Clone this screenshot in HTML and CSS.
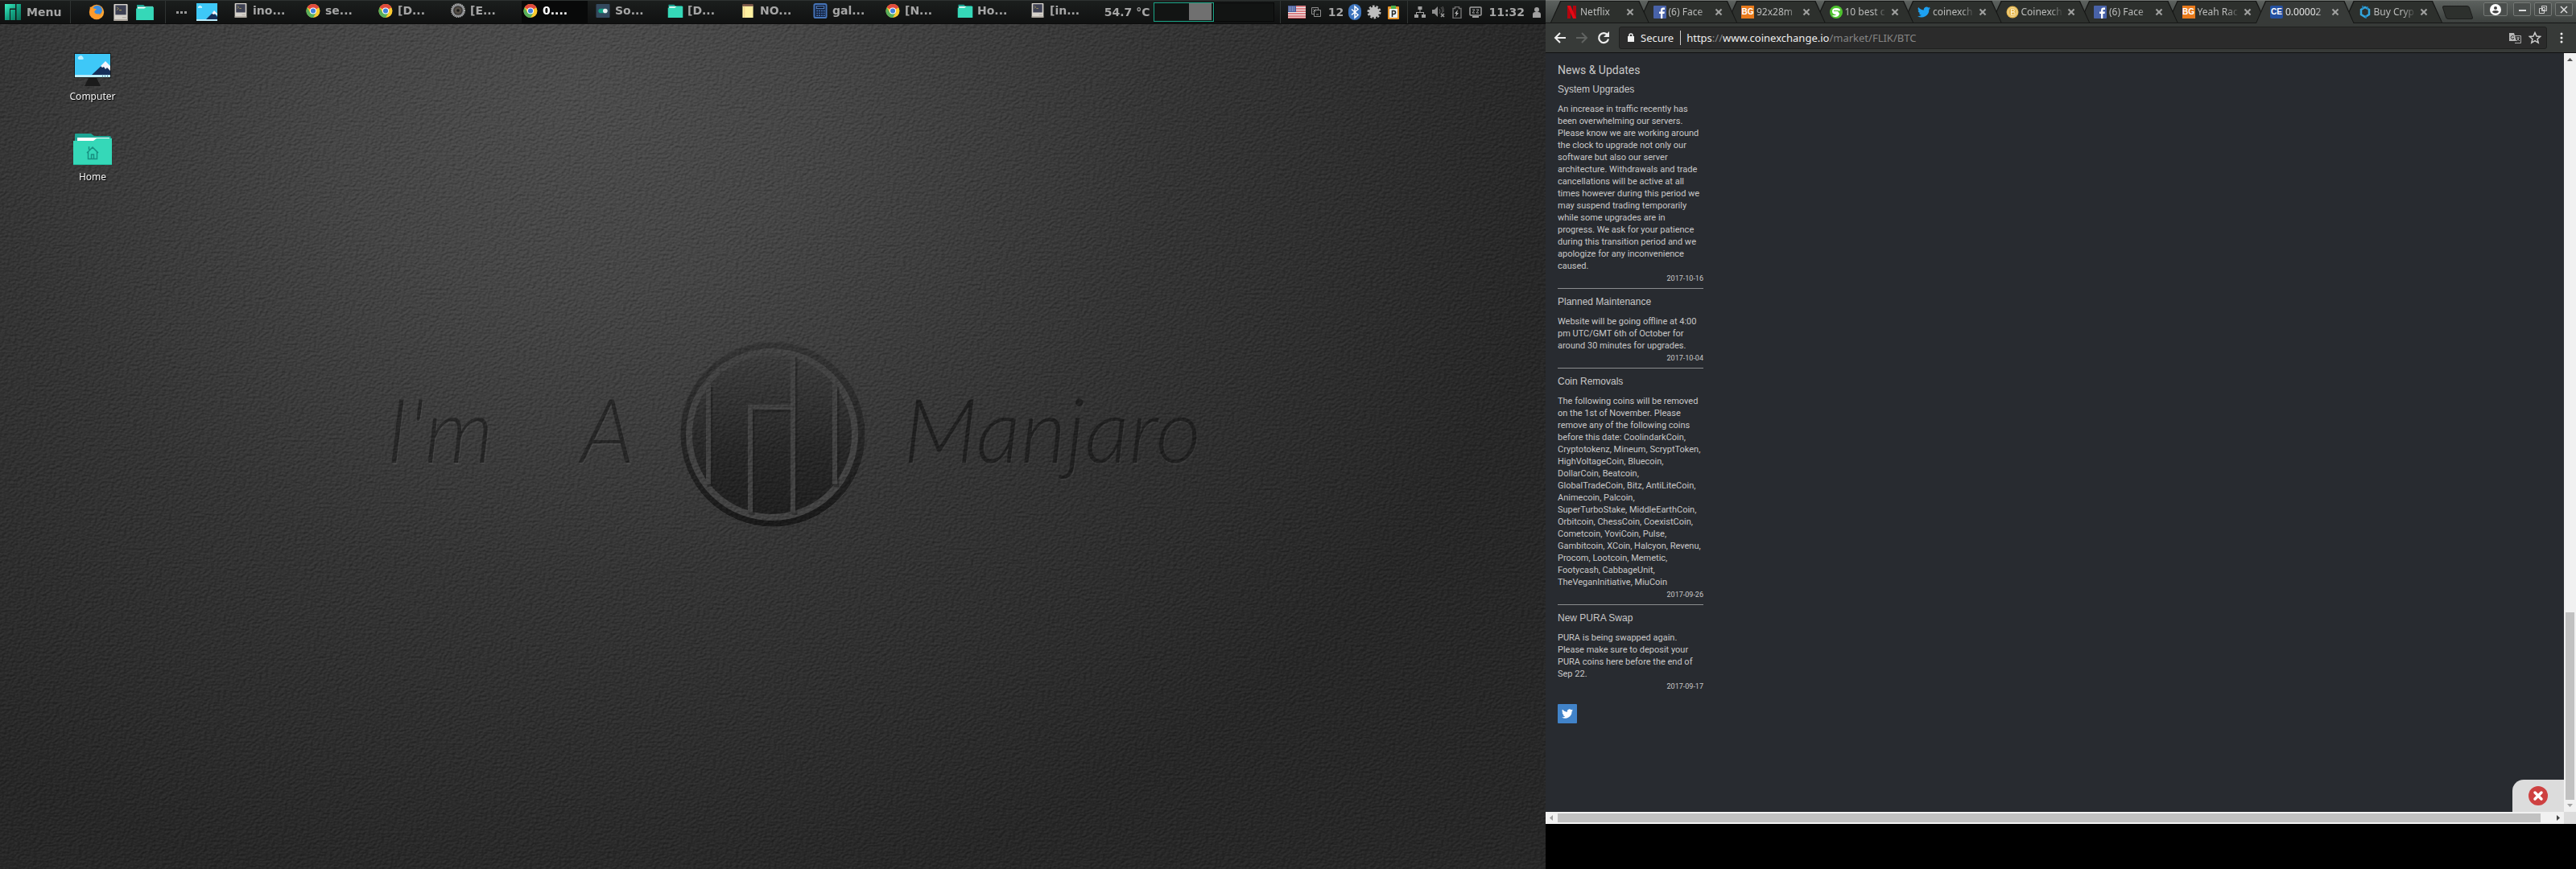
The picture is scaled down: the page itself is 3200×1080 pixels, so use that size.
FILE: index.html
```html
<!DOCTYPE html>
<html lang="en">
<head>
<meta charset="utf-8">
<title>Desktop</title>
<link rel="stylesheet" href="styles.css">
</head>
<body>
<svg class="defs" aria-hidden="true">
  <defs>
    <linearGradient id="mj" x1="0" y1="0" x2="1" y2="1"><stop offset="0" stop-color="#3ff0c4"/><stop offset=".5" stop-color="#14a383"/><stop offset="1" stop-color="#0b6b54"/></linearGradient>
    <linearGradient id="disc" x1="0" y1="0" x2="0" y2="1"><stop offset="0" stop-color="#3c3c3c"/><stop offset=".6" stop-color="#272727"/><stop offset="1" stop-color="#1f1f1f"/></linearGradient>
    <linearGradient id="rim" x1="0" y1="0" x2="0" y2="1"><stop offset="0" stop-color="#343434"/><stop offset="1" stop-color="#191919"/></linearGradient>
    <symbol id="manjaro" viewBox="0 0 20 20"><path fill="url(#mj)" d="M0 0h13v5.500H6V20H0zM7 7h6v13H7zM14.500 0H20v20h-5.500z"/></symbol>
    <symbol id="firefox" viewBox="0 0 24 24"><circle cx="12" cy="12" r="10" fill="#fd9a2b"/><circle cx="13" cy="9.500" r="6.500" fill="#3b8de0"/><path fill="#fd9a2b" d="M3 5c2 1 4 1 5 2l4 1c-1 2-3 2-3 4 1 3 5 3 7 2-2 5-10 6-13 1z"/><path fill="#f4b13c" d="M20 7c3 6 0 12-5 14 4-3 6-9 5-14z"/></symbol>
    <symbol id="term" viewBox="0 0 18 22"><rect width="18" height="22" rx="1" fill="#d6d2cb"/><rect x="2" y="1.500" width="14" height="12.500" fill="#3e4153"/><path d="M4 4l2 2-2 2M7 8h3" fill="none" stroke="#b3a55a"/><path fill="#aaa49c" d="M11 17h5v1h-5zM0 20h18v2H0z"/></symbol>
    <symbol id="folder" viewBox="0 0 24 22"><path fill="#1da594" d="M1 1h9l2 2h11v4H1z"/><path fill="#fff" d="M2 4h21v4H2z"/><path fill="#35d8b8" d="M0 6h11l3-2h10v18H0z"/></symbol>
    <symbol id="chrome" viewBox="0 0 20 20"><circle cx="10" cy="10" r="10" fill="#fccb2f"/><path fill="#e04a3d" d="M10 10L1.300 5A10 10 0 0 1 18.700 5z"/><path fill="#58b05c" d="M1.300 5A10 10 0 0 0 10 20l4.300-7.500L5.700 12.500z"/><circle cx="10" cy="10" r="4.800" fill="#fff"/><circle cx="10" cy="10" r="3.600" fill="#4080dc"/></symbol>
    <symbol id="speaker" viewBox="0 0 20 20"><circle cx="10" cy="10" r="9" fill="#8b8d90" stroke="#aaa" stroke-width="2" stroke-dasharray="1.500 1"/><circle cx="10" cy="10" r="6.500" fill="#3a3836"/><circle cx="10" cy="10" r="4.500" fill="#565048"/><circle cx="10" cy="10" r="2" fill="#171717"/></symbol>
    <symbol id="toggle" viewBox="0 0 18 18"><rect width="18" height="18" rx="1" fill="#34495e"/><rect x="3" y="6" width="12" height="6" rx="3" fill="#16a085"/><circle cx="12" cy="9" r="3" fill="#ecf0f1"/></symbol>
    <symbol id="note" viewBox="0 0 14 18"><path fill="#fdf0a0" d="M0 2h14v16H0z"/><path fill="#795548" d="M0 0h14v3H0z"/><path fill="#f0c987" d="M2 3h1v15H2z"/></symbol>
    <symbol id="calc" viewBox="0 0 18 20"><rect x="1" y="1" width="16" height="18" rx="2" fill="#14233f" stroke="#4674b8" stroke-width="2"/><rect x="4" y="4" width="10" height="3" fill="#0b1424" stroke="#5d8ace"/><path stroke="#4674b8" stroke-width="1.500" stroke-dasharray="2 1" d="M4 10h11M4 13h11M4 16h11"/></symbol>
    <symbol id="screen" viewBox="0 0 26 22"><rect width="26" height="22" fill="#3ec8f8"/><path fill="#16305a" d="M12 20l9-9 5 6v3z"/><path fill="#f3f4fa" d="M19 13l3-4 4 4v2l-3-2-1 1z"/><path fill="#bdeefd" d="M0 20h26v2H0zM2 4h5v2H2zM3 3h3v1H3z"/></symbol>
    <symbol id="fb" viewBox="0 0 16 16"><rect width="16" height="16" rx="1" fill="#4862a8"/><path fill="#fff" d="M9 16V10H7V7.500h2V6c0-2.500 1-3.500 3-3.500h2v2.500h-1.500c-1 0-1.200.4-1.200 1.200v1.300h2.600L13.500 10h-2.200v6z"/></symbol>
    <symbol id="bird" viewBox="0 0 24 24"><path d="M24 4.600a10 10 0 0 1-2.800.8 5 5 0 0 0 2.100-2.700 10 10 0 0 1-3.100 1.200 4.900 4.900 0 0 0-8.400 4.500A14 14 0 0 1 1.700 3.100a4.900 4.900 0 0 0 1.500 6.600 5 5 0 0 1-2.200-.6 4.900 4.900 0 0 0 3.900 4.900 5 5 0 0 1-2.200.1 4.900 4.900 0 0 0 4.600 3.400A10 10 0 0 1 0 19.500a14 14 0 0 0 21.500-12.400A10 10 0 0 0 24 4.600z"/></symbol>
  </defs>
</svg>

<main class="screens">
  <section class="desktop" aria-label="Desktop">
    <svg class="grain" aria-hidden="true">
      <filter id="leather" x="0" y="0" width="100%" height="100%" color-interpolation-filters="sRGB">
        <feTurbulence type="fractalNoise" baseFrequency=".25 .35" numOctaves="2" seed="4"/>
        <feDiffuseLighting surfaceScale="1.500" diffuseConstant=".62" lighting-color="#fff"><feDistantLight azimuth="235" elevation="55"/></feDiffuseLighting>
      </filter>
      <rect width="100%" height="100%" filter="url(#leather)"/>
    </svg>
    <div class="emboss">
      <p class="script script-left"><span>I'm</span><span>A</span></p>
      <svg class="medal" viewBox="0 0 232 232" aria-hidden="true">
        <circle cx="116" cy="116" r="115" fill="url(#rim)" stroke="#3a3a3a"/>
        <circle cx="115" cy="116" r="103" fill="url(#disc)" stroke="#424242" stroke-width="8"/>
        <path d="M36 54v124M193 54v124M88 213V82h54M141 17v196" fill="none" stroke="#1c1c1c" stroke-width="7" transform="translate(2 3)" opacity=".5"/>
        <path d="M36 54v124M193 54v124M88 213V82h54M141 17v196" fill="none" stroke="#414141" stroke-width="6"/>
      </svg>
      <p class="script script-right">Manjaro</p>
    </div>

    <header class="panel">
      <button class="menu"><svg width="20" height="20"><use href="#manjaro"/></svg>Menu</button>
      <div class="launchers">
        <button aria-label="Firefox"><svg width="24" height="22"><use href="#firefox"/></svg></button>
        <button aria-label="Terminal"><svg width="18" height="21"><use href="#term"/></svg></button>
        <button aria-label="Files"><svg width="24" height="20"><use href="#folder"/></svg></button>
      </div>
      <span class="dots"><i></i><i></i><i></i></span>
      <button class="show" aria-label="Show desktop"><svg width="26" height="22"><use href="#screen"/></svg></button>
      <nav class="tasks">
        <button><svg width="20" height="18"><use href="#term"/></svg>ino...</button>
        <button><svg width="20" height="17"><use href="#chrome"/></svg>se...</button>
        <button><svg width="20" height="17"><use href="#chrome"/></svg>[D...</button>
        <button><svg width="20" height="18"><use href="#speaker"/></svg>[E...</button>
        <button class="on"><svg width="20" height="17"><use href="#chrome"/></svg>0....</button>
        <button><svg width="20" height="17"><use href="#toggle"/></svg>So...</button>
        <button><svg width="20" height="17"><use href="#folder"/></svg>[D...</button>
        <button><svg width="20" height="17"><use href="#note"/></svg>NO...</button>
        <button><svg width="20" height="19"><use href="#calc"/></svg>gal...</button>
        <button><svg width="20" height="17"><use href="#chrome"/></svg>[N...</button>
        <button><svg width="20" height="17"><use href="#folder"/></svg>Ho...</button>
        <button><svg width="20" height="18"><use href="#term"/></svg>[in...</button>
      </nav>
      <span class="temp">54.7 °C</span>
      <div class="pager"><button class="now" aria-label="Workspace 1"><i></i></button><button aria-label="Workspace 2"></button></div>
      <div class="tray apps">
        <svg width="22" height="16" viewBox="0 0 22 16"><path fill="#eee" d="M0 0h22v16H0z"/><path stroke="#d45a60" stroke-width="1.500" d="M0 1h22M0 4h22M0 7h22M0 10h22M0 13h22M0 15.500h22"/><path fill="#4a5f9c" d="M0 0h10v8H0z"/><path stroke="#cdd4ea" stroke-dasharray="1 1" d="M1 2h8M1 4h8M1 6h8"/></svg>
        <svg width="12" height="12" viewBox="0 0 12 12" fill="none" stroke="#8e8e8e"><path d="M3.500 8.500h-3v-8h8v3M3.500 3.500h8v8h-8zM2.500 2.500l3 3M5.500 2.500l-3 3M6 9h3"/></svg>
        <span>12</span>
        <svg width="16" height="20" viewBox="0 0 16 20"><rect width="16" height="20" rx="8" fill="#3d74bd"/><path d="M4 6.500l8 7-4 3.500V3l4 3.500-8 7" fill="none" stroke="#fff" stroke-width="1.500"/></svg>
        <svg width="18" height="18" viewBox="0 0 18 18"><circle cx="9" cy="9" r="6.500" fill="#bdbdbd"/><circle cx="9" cy="9" r="7" fill="none" stroke="#bdbdbd" stroke-width="3" stroke-dasharray="2.500 1.900"/></svg>
        <svg width="14" height="17" viewBox="0 0 14 17"><rect y="1" width="14" height="16" rx="1" fill="#e8952c"/><path fill="#eef4fb" d="M2 4h10v11H2z"/><path fill="#4cb04a" d="M4 0h6v4H4z"/><path d="M5.500 14V6.500h2a2 2 0 0 1 0 4h-2" fill="none" stroke="#222" stroke-width="1.500"/></svg>
      </div>
      <div class="tray system">
        <svg width="14" height="14" viewBox="0 0 14 14" fill="#a0a0a0"><path d="M4.500 0h5v4h-5zM0 10h5v4H0zM9 10h5v4H9zM6.500 4h1v3h-1zM2 7h10v1H2zM2 7h1v3H2zM11 7h1v3h-1z"/></svg>
        <svg width="16" height="14" viewBox="0 0 16 14"><path fill="#8e8e8e" d="M0 4h3l4-4v13L3 9H0z"/><path d="M9 3q2 3 0 6M11 1q4 5 0 9M13 0q2 4 1 7" fill="none" stroke="#5e5e5e"/><path d="M11 9l4 4M15 9l-4 4" stroke="#a0a0a0" stroke-width="1.500"/></svg>
        <svg width="12" height="15" viewBox="0 0 12 15"><path d="M1 2.500h2.500v-2h5v2H11v12H1z" fill="none" stroke="#6e6e6e" stroke-width="1.500"/><path fill="#b0b0b0" d="M7 4L3 9h2l-1 4 4-5H6z"/></svg>
        <svg width="16" height="14" viewBox="0 0 16 14"><rect x="1" y="1" width="14" height="10" rx="1" fill="none" stroke="#a0a0a0" stroke-width="1.500"/><path d="M4 4h3L4 8h3M9 4h3L9 8h3" fill="none" stroke="#a0a0a0"/><path fill="#a0a0a0" d="M4 12h8v2H4z"/></svg>
      </div>
      <time class="clock">11:32</time>
      <svg class="user" width="10" height="13" viewBox="0 0 10 13" fill="#a0a0a0"><circle cx="5" cy="3" r="3"/><path d="M0 13V9q0-3 3-3h4q3 0 3 3v4z"/></svg>
    </header>

    <nav class="icons">
      <a href="#computer">
        <svg width="48" height="48" viewBox="0 0 48 48"><path fill="#1b1b1b" d="M1 5h46v31H1zM19 36h10l5 10H14z"/><path fill="#3ec8f8" d="M2 6h44v26H2z"/><path fill="#16305a" d="M23 32l17-16 6 7v9z"/><path fill="#f3f4fa" d="M34 21l6-6 6 6v6l-4-4-2 2-2-3-2 1z"/><path fill="#bdeefd" d="M2 32h44v3H2zM6 10q4-4 6 0 2 3-1 3H7q-2-1-1-3z"/><path fill="#16305a" d="M36 33h1v1h-1zM39 33h1v1h-1zM42 33h1v1h-1z"/></svg>
        Computer
      </a>
      <a href="#home">
        <svg width="48" height="48" viewBox="0 0 48 48"><path fill="#1da594" d="M2 6q0-1 1-1h19l4 3h19q2 0 2 2v6H2z"/><path fill="#fff" d="M5 10h40v7H5z"/><path fill="#35d8b8" d="M0 14h25l4-3h19v33H0z"/><path fill="#22b89c" d="M0 43h48v1H0z"/><path d="M17 29l7-7 7 7M18.500 28v8.500h11V28M19.500 25v-4M22.500 36v-5h3v5" fill="none" stroke="#178f80" stroke-width="1.500"/></svg>
        Home
      </a>
    </nav>
  </section>

  <section class="monitor" aria-label="Browser">
    <div class="window">
      <div class="titlebar">
        <ul class="tabs">
          <li style="--z:9"><a href="#t1"><svg width="16" height="16" viewBox="0 0 16 16"><path fill="#b1060f" d="M3 0h4v16H3zM10 0h4v16h-4z"/><path fill="#e50914" d="M3 0h4l7 16h-4z"/></svg><span>Netflix</span></a><button aria-label="Close"></button></li>
          <li style="--z:8"><a href="#t2"><svg width="16" height="16"><use href="#fb"/></svg><span>(6) Face</span></a><button aria-label="Close"></button></li>
          <li style="--z:7"><a href="#t3"><b class="fav orange">BG</b><span>92x28m</span></a><button aria-label="Close"></button></li>
          <li style="--z:6"><a href="#t4"><svg width="16" height="16" viewBox="0 0 16 16"><circle cx="8" cy="8" r="8" fill="#4fc32f"/><path fill="#fff" d="M3 7q0-4 5-4 5 0 5 3l-3 1 2 3q-1 4-5 4-3 0-4-2 4 1 5-1-5 0-5-4z"/><path fill="#4fc32f" d="M5 6h6v1H5z"/></svg><span>10 best c</span></a><button aria-label="Close"></button></li>
          <li style="--z:5"><a href="#t5"><svg width="16" height="16" fill="#1da1f2"><use href="#bird"/></svg><span>coinexch</span></a><button aria-label="Close"></button></li>
          <li style="--z:4"><a href="#t6"><svg width="16" height="16" viewBox="0 0 16 16"><circle cx="8" cy="8" r="7.500" fill="#e5b650"/><circle cx="8" cy="8" r="5.500" fill="none" stroke="#f6dfa0"/><path d="M6.500 4.500h2.200a1.700 1.700 0 0 1 0 3.400H6.500zm0 3.400h2.700a1.800 1.800 0 0 1 0 3.600H6.500z" fill="none" stroke="#fff3cf"/></svg><span>Coinexch</span></a><button aria-label="Close"></button></li>
          <li style="--z:3"><a href="#t7"><svg width="16" height="16"><use href="#fb"/></svg><span>(6) Face</span></a><button aria-label="Close"></button></li>
          <li style="--z:2"><a href="#t8"><b class="fav orange">BG</b><span>Yeah Rac</span></a><button aria-label="Close"></button></li>
          <li class="current" style="--z:10"><a href="#t9"><b class="fav blue">CE</b><span>0.00002</span></a><button aria-label="Close"></button></li>
          <li style="--z:1"><a href="#t10"><svg width="16" height="16" viewBox="0 0 16 16"><path d="M8 2l5 3v6l-5 3-5-3V5z" fill="none" stroke="#34a5dc" stroke-width="2.500"/><path d="M5 0v4M9 12v4M11 1v4" stroke="#1d7fb8" stroke-width="1.500"/></svg><span>Buy Cryp</span></a><button aria-label="Close"></button></li>
        </ul>
        <button class="newtab" aria-label="New tab"></button>
        <div class="controls">
          <button class="profile" aria-label="Profile"><svg width="14" height="14" viewBox="0 0 14 14"><circle cx="7" cy="7" r="7" fill="#fff"/><circle cx="7" cy="5" r="2" fill="#444"/><path fill="#444" d="M3 10q0-2 4-2t4 2q-4 3-8 0z"/></svg></button>
          <button aria-label="Minimize"><svg width="12" height="12"><path d="M2 7h9" stroke="#ddd" stroke-width="2"/></svg></button>
          <button aria-label="Restore"><svg width="12" height="12" fill="none" stroke="#ccc"><path d="M4.500 1.500h6v6h-6zM4 4.500H1.500v6h6V8M5.500 3.500h3v3h-3z"/></svg></button>
          <button aria-label="Close window"><svg width="12" height="12"><path d="M2 2l8 8M10 2l-8 8" stroke="#ddd" stroke-width="1.500"/></svg></button>
        </div>
      </div>

      <div class="toolbar">
        <button aria-label="Back"><svg width="16" height="16" viewBox="0 0 16 16"><path d="M15 8H2M8 2L2 8l6 6" fill="none" stroke="#eee" stroke-width="2"/></svg></button>
        <button aria-label="Forward"><svg width="16" height="16" viewBox="0 0 16 16"><path d="M1 8h13M8 2l6 6-6 6" fill="none" stroke="#606361" stroke-width="2"/></svg></button>
        <button aria-label="Reload"><svg width="16" height="16" viewBox="0 0 16 16"><path d="M13 4.500A6 6 0 1 0 14 9.500" fill="none" stroke="#eee" stroke-width="2.200"/><path fill="#eee" d="M15 0v7H8z"/></svg></button>
        <div class="omnibox">
          <svg width="10" height="12" viewBox="0 0 10 12"><rect x="1" y="4" width="8" height="7" fill="#f0f0f0"/><path d="M3 5V3a2 2 0 0 1 4 0v2" fill="none" stroke="#f0f0f0" stroke-width="1.500"/></svg>
          <span class="secure">Secure</span>
          <span class="url">https<i>://</i>www.coinexchange.io<i>/market/FLIK/BTC</i></span>
          <button aria-label="Translate"><svg width="15" height="15" viewBox="0 0 15 15"><path d="M6 4.500h8.500v9H7" fill="none" stroke="#aaa"/><path fill="#b8b8b8" d="M0 1h6l3 10H0z"/><path d="M6 5.500a2 2 0 1 0 0 2H4.500" fill="none" stroke="#333"/><path d="M9 7h4M11 6v1M12 7q-1 3-3 4M10 8l3 3" stroke="#aaa" fill="none"/></svg></button>
          <button aria-label="Bookmark"><svg width="16" height="16" viewBox="0 0 16 16"><path d="M8 1.500l2 4.500 4.700.4-3.600 3.100 1.100 4.700L8 11.700l-4.200 2.500 1.100-4.700L1.300 6.400 6 6z" fill="none" stroke="#ccc" stroke-width="1.500"/></svg></button>
        </div>
        <button class="more" aria-label="More"><svg width="4" height="14" fill="#eee"><circle cx="2" cy="2" r="1.500"/><circle cx="2" cy="7" r="1.500"/><circle cx="2" cy="12" r="1.500"/></svg></button>
      </div>

      <div class="viewport">
        <div class="page">
          <aside class="news">
            <h1>News &amp; Updates</h1>
            <article><h2>System Upgrades</h2><p>An increase in traffic recently has been overwhelming our servers. Please know we are working around the clock to upgrade not only our software but also our server architecture. Withdrawals and trade cancellations will be active at all times however during this period we may suspend trading temporarily while some upgrades are in progress. We ask for your patience during this transition period and we apologize for any inconvenience caused.</p><time>2017-10-16</time></article>
            <article><h2>Planned Maintenance</h2><p>Website will be going offline at 4:00 pm UTC/GMT 6th of October for around 30 minutes for upgrades.</p><time>2017-10-04</time></article>
            <article><h2>Coin Removals</h2><p>The following coins will be removed on the 1st of November. Please remove any of the following coins before this date: CoolindarkCoin, Cryptotokenz, Mineum, ScryptToken, HighVoltageCoin, Bluecoin, DollarCoin, Beatcoin, GlobalTradeCoin, Bitz, AntiLiteCoin, Animecoin, Palcoin, SuperTurboStake, MiddleEarthCoin, Orbitcoin, ChessCoin, CoexistCoin, Cometcoin, YoviCoin, Pulse, Gambitcoin, XCoin, Halcyon, Revenu, Procom, Lootcoin, Memetic, Footycash, CabbageUnit, TheVeganInitiative, MiuCoin</p><time>2017-09-26</time></article>
            <article><h2>New PURA Swap</h2><p>PURA is being swapped again. Please make sure to deposit your PURA coins here before the end of Sep 22.</p><time>2017-09-17</time></article>
            <a class="twitter" href="#twitter" aria-label="Twitter"><svg width="14" height="14" fill="#fff"><use href="#bird"/></svg></a>
          </aside>
          <button class="chat" aria-label="Close chat"><svg width="24" height="24" viewBox="0 0 24 24"><circle cx="12" cy="12" r="12" fill="#ce4141"/><path d="M8 8l8 8M16 8l-8 8" stroke="#fff" stroke-width="3.500" stroke-linecap="round"/></svg></button>
        </div>
        <div class="vbar"><svg width="7" height="4"><path fill="#505050" d="M0 4l3.500-4L7 4z"/></svg><i></i><svg width="7" height="4"><path fill="#a0a0a0" d="M0 0h7L3.500 4z"/></svg></div>
        <div class="hbar"><svg width="4" height="7"><path fill="#a0a0a0" d="M4 0v7L0 3.500z"/></svg><i></i><svg width="4" height="7"><path fill="#404040" d="M0 0l4 3.500L0 7z"/></svg></div>
        <div class="corner"></div>
      </div>
    </div>
  </section>
</main>
</body>
</html>
```
FILE: styles.css
```css
* { box-sizing: border-box; }
body { margin: 0; background: #000; font-family: "Noto Sans", sans-serif; }
button { margin: 0; padding: 0; border: 0; background: none; color: inherit; font: inherit; }
a { color: inherit; text-decoration: none; }
svg { display: block; flex: none; }
p, h1, h2, ul { margin: 0; padding: 0; font-weight: 400; list-style: none; }
.defs { position: absolute; width: 0; height: 0; }
.screens { display: grid; grid-template-columns: 3fr 2fr; min-height: 100vh; }

/* Desktop and wallpaper */
.desktop {
  position: relative; isolation: isolate; overflow: hidden; min-width: 0;
  background: radial-gradient(ellipse 65% 95% at 37% 10%, #4c4c4c 0%, #454545 25%, #343434 60%, #272727 100%);
}
.grain { position: absolute; inset: 0; width: 100%; height: 100%; z-index: -1; mix-blend-mode: soft-light; opacity: .6; }
.emboss {
  position: absolute; inset: 0; z-index: -2;
  display: grid; grid-template-columns: 1fr auto 1fr; align-items: center;
}
.medal { width: 232px; height: 232px; }
.script { display: flex; gap: 108px; padding-bottom: 16px; font: italic 300 110px/128px Lato, sans-serif; color: #262626; text-shadow: 1px 2px 1px #484848; }
.script-left { justify-content: flex-end; padding-right: 56px; }
.script-right { padding-left: 46px; color: #1f1f1f; text-shadow: 1px 2px 1px #3a3a3a; }

/* Top panel */
.panel {
  display: flex; align-items: center; height: 30px; padding-right: 6px;
  background: linear-gradient(#1b1e1d, #101111); border-top: 1px solid #2d3230; border-bottom: 1px solid #0c0c0c;
  color: #a6a6a6; font: bold 14px/20px "DejaVu Sans", sans-serif; white-space: nowrap;
}
.menu { display: flex; align-items: center; gap: 7px; width: 88px; height: 28px; padding-left: 6px; border-right: 1px solid #2f3332; }
.launchers { display: flex; gap: 6px; width: 118px; height: 28px; padding-left: 20px; border-right: 1px solid #2f3332; align-items: center; }
.launchers button { display: flex; justify-content: center; width: 24px; }
.dots { display: flex; gap: 2px; margin-left: 13px; }
.dots i { width: 3px; height: 3px; background: #999; }
.show { margin-left: 12px; }
.tasks { display: flex; flex: 1; gap: 8px; margin-left: 18px; min-width: 0; }
.tasks button { display: flex; align-items: center; gap: 5px; width: 82px; height: 28px; padding: 0 0 4px 1px; }
.tasks .on { background: #080909; color: #fff; }
.temp { margin-right: 5px; }
.pager { display: flex; margin-right: 7px; }
.pager button { width: 75px; height: 24px; border: 1px solid #080808; background: #121413; }
.pager .now { display: flex; justify-content: flex-end; border: 1px solid #1aa587; padding: 0 2px 1px; }
.pager i { width: 28px; height: 21px; background: #707070; }
.tray { display: flex; align-items: center; height: 28px; border-left: 1px solid #2f3332; }
.tray > * { box-sizing: content-box; display: flex; justify-content: center; }
.apps { display: grid; grid-template-columns: repeat(6, 24px); justify-items: center; padding: 0 5px 0 8px; }
.apps > * { width: auto; }
.system { display: grid; grid-template-columns: repeat(4, 23px); justify-items: center; padding: 0 5px 0 3px; }
.user { margin-left: 10px; }

/* Desktop shortcuts */
.icons { display: flex; flex-direction: column; align-items: flex-start; gap: 33px; padding: 31px 0 0 75px; }
.icons a { display: flex; flex-direction: column; align-items: center; gap: 3px; width: 80px; color: #f2f2f2; font-size: 12px; line-height: 16px; text-shadow: 1px 1px 1px #000; }

/* Browser window */
.monitor { display: flex; flex-direction: column; min-width: 0; padding-bottom: 56px; background: #000; }
.window { display: flex; flex: 1; flex-direction: column; }
.titlebar { display: flex; height: 29px; padding-left: 6px; background: linear-gradient(#5c615e, #3c403e); border-top: 1px solid #727673; border-bottom: 1px solid #161716; }
.tabs { display: flex; flex: 0 1 1108px; padding-right: 13px; color: #bcbdbc; font-size: 12px; line-height: 16px; }
.tabs li { position: relative; z-index: var(--z); display: flex; flex: 1 1 0; align-items: center; min-width: 0; height: 27px; margin-right: -13px; padding-left: 18px; }
.tabs li::before, .tabs li::after { content: ""; position: absolute; z-index: -1; inset: 0; clip-path: polygon(0 100%, 12px 0, calc(100% - 12px) 0, 100% 100%); background: #151615; }
.tabs li::after { inset: 1px 1px 0; background: #2d302d; }
.tabs .current { height: 28px; color: #e4e4e4; }
.tabs .current::after { background: #373a38; }
.tabs a { display: flex; align-items: center; gap: 3px; }
.tabs span { width: 52px; white-space: nowrap; -webkit-mask-image: linear-gradient(90deg, #000 70%, transparent); mask-image: linear-gradient(90deg, #000 70%, transparent); }
.tabs button { position: relative; width: 8px; height: 8px; margin-left: 6px; }
.tabs button::before, .tabs button::after { content: ""; position: absolute; left: -1px; top: 3px; width: 10px; height: 2px; background: #a0a1a0; transform: rotate(45deg); }
.tabs button::after { transform: rotate(-45deg); }
.fav { width: 16px; height: 16px; color: #fff; font: bold 10px/16px "Liberation Sans", sans-serif; text-align: center; }
.orange { background: #e87a1c; }
.blue { background: #2450a0; border-radius: 2px; }
.newtab { width: 34px; height: 17px; margin: 6px 0 0 2px; background: #2d302d; border: 1px solid #1c1d1c; border-radius: 3px; transform: skewX(18deg); }
.controls { display: flex; gap: 4px; margin: 2px 4px 0 auto; }
.controls button { display: grid; place-items: center; width: 22px; height: 17px; border: 1px solid #747875; border-radius: 2px; background: #4a4e4c; }
.controls .profile { width: 30px; margin-right: 3px; }

.toolbar { display: flex; align-items: center; height: 37px; padding: 0 16px 0 10px; background: #373a38; border-bottom: 1px solid #111; }
.toolbar > button { margin-right: 11px; }
.omnibox { display: flex; flex: 1; align-items: center; height: 28px; margin-right: 16px; padding: 0 6px 0 9px; background: #2b2b2b; border: 1px solid #1f201f; border-radius: 3px; color: #eee; font-size: 13px; line-height: 18px; }
.secure { margin-left: 7px; padding-right: 8px; border-right: 1px solid #ccc; }
.url { flex: 1; margin-left: 7px; }
.url i { color: #858585; font-style: normal; }
.omnibox button { margin-left: 9px; }
.toolbar .more { margin: 0; }

.viewport { display: grid; flex: 1; grid-template: 1fr 15px / 1fr 15px; }
.page { position: relative; padding: 11px 15px; background: #282b30; color: #c8c8c8; font-family: Roboto, sans-serif; }
.news { width: 181px; }
.news h1 { margin-bottom: 6px; font-size: 14px; line-height: 20px; }
.news h2 { margin-bottom: 9px; font: 12px/16px "Liberation Sans", Arial, sans-serif; }
.news p { font-size: 11px; line-height: 15px; }
.news time { display: block; padding-top: 1px; font-size: 9px; line-height: 15px; text-align: right; }
.news article + article { margin-top: 4px; padding-top: 8px; border-top: 1px solid #8a8c8e; }
.twitter { display: grid; place-items: center; width: 24px; height: 24px; margin-top: 14px; background: #4183c9; border-radius: 1px; }
.chat { position: absolute; right: 0; bottom: 0; display: grid; place-items: center; width: 64px; height: 40px; background: #dcdcdc; border-radius: 14px 0 0 0; }
.vbar, .hbar { display: flex; align-items: center; justify-content: space-between; background: #f1f1f1; }
.vbar { flex-direction: column; padding: 6px 0; }
.vbar i { width: 11px; height: 25%; margin: auto 0 5px; background: #c1c1c1; }
.hbar { padding: 0 5px; }
.hbar i { flex: 1; height: 11px; margin: 0 20px 0 6px; background: #c1c1c1; }
.corner { background: #dcdcdc; }
```
